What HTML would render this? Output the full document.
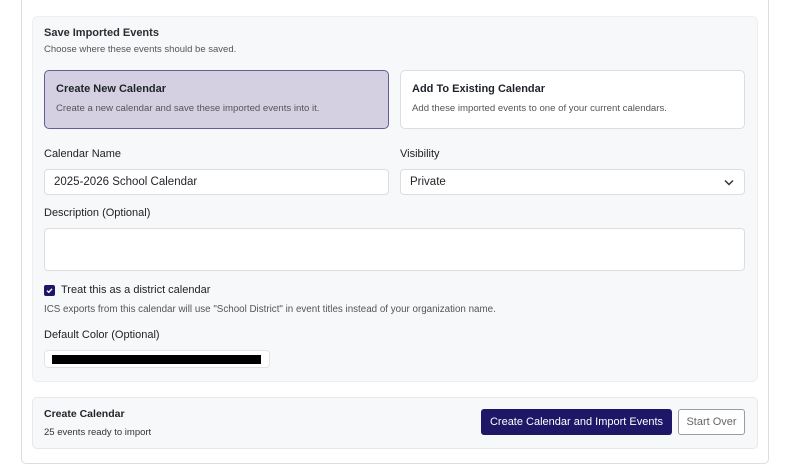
<!DOCTYPE html>
<html><head><style>
*{box-sizing:border-box;margin:0;padding:0}
body{width:800px;height:467px;background:#fff;font-family:"Liberation Sans",sans-serif;color:#1f2328;position:relative;overflow:hidden}
.abs{position:absolute}
.outer{left:21px;top:-5px;width:748px;height:469px;border:1px solid #dcdde0;border-radius:5px;background:#fff}
.sec{left:32px;top:16px;width:726px;height:366px;background:#f7f8fa;border:1px solid #eceef1;border-radius:6px}
.s{font-size:9.5px;color:#555}
.card{border-radius:5px;background:#fff;border:1px solid #dcdde0}
.inp{background:#fff;border:1px solid #dcdde0;border-radius:4px;font-size:11.5px;padding-left:9px;display:flex;align-items:center}
.lbl{font-size:11px;color:#222}
</style></head><body>
<div class="abs outer"></div>
<div class="abs sec"></div>
<div class="abs" style="left:44px;top:27px;font-size:11px;font-weight:bold;color:#2a2d33">Save Imported Events</div>
<div class="abs s" style="left:44px;top:44px">Choose where these events should be saved.</div>
<div class="abs card" style="left:44px;top:70px;width:345px;height:59px;background:#d4d0e1;border:1px solid #665c9c"></div>
<div class="abs" style="left:56px;top:83px;font-size:11px;font-weight:bold">Create New Calendar</div>
<div class="abs s" style="left:56px;top:103px;font-size:9.6px">Create a new calendar and save these imported events into it.</div>
<div class="abs card" style="left:400px;top:70px;width:345px;height:59px"></div>
<div class="abs" style="left:412px;top:83px;font-size:11px;font-weight:bold">Add To Existing Calendar</div>
<div class="abs s" style="left:412px;top:103px;font-size:9.6px">Add these imported events to one of your current calendars.</div>
<div class="abs lbl" style="left:44px;top:148px">Calendar Name</div>
<div class="abs inp" style="left:44px;top:169px;width:345px;height:26px">2025-2026 School Calendar</div>
<div class="abs lbl" style="left:400px;top:148px">Visibility</div>
<div class="abs inp" style="left:400px;top:169px;width:345px;height:26px">Private
<svg style="position:absolute;right:10px;top:9px" width="10" height="7" viewBox="0 0 10 7"><path d="M1 1.5L5 5.5L9 1.5" fill="none" stroke="#333" stroke-width="1.5"/></svg></div>
<div class="abs lbl" style="left:44px;top:207px">Description (Optional)</div>
<div class="abs inp" style="left:44px;top:228px;width:701px;height:43px"></div>
<div class="abs" style="left:44px;top:285px;width:11px;height:11px;background:#1e1666;border-radius:2px">
<svg width="11" height="11" viewBox="0 0 11 11" style="position:absolute;left:0;top:0"><path d="M3 5.6L4.8 7.3L8 3.8" fill="none" stroke="#fff" stroke-width="1.4"/></svg></div>
<div class="abs lbl" style="left:61px;top:284px">Treat this as a district calendar</div>
<div class="abs s" style="left:44px;top:304px;font-size:9.8px">ICS exports from this calendar will use "School District" in event titles instead of your organization name.</div>
<div class="abs lbl" style="left:44px;top:329px">Default Color (Optional)</div>
<div class="abs" style="left:44px;top:350px;width:226px;height:18px;background:#fff;border:1px solid #e2e3e6;border-radius:4px"></div>
<div class="abs" style="left:52px;top:355px;width:209px;height:9px;background:#000"></div>
<div class="abs" style="left:32px;top:397px;width:726px;height:52px;background:#f7f8fa;border:1px solid #e6e8eb;border-radius:5px"></div>
<div class="abs" style="left:44px;top:408px;font-size:10.5px;font-weight:bold">Create Calendar</div>
<div class="abs" style="left:44px;top:427px;font-size:9.5px;color:#333">25 events ready to import</div>
<div class="abs" style="left:481px;top:409px;width:191px;height:26px;background:#1e1666;border-radius:3px;color:#fff;font-size:11px;display:flex;align-items:center;justify-content:center">Create Calendar and Import Events</div>
<div class="abs" style="left:678px;top:409px;width:67px;height:26px;background:#fff;border:1px solid #9a9ca0;border-radius:3px;color:#666;font-size:11px;display:flex;align-items:center;justify-content:center">Start Over</div>
</body></html>
